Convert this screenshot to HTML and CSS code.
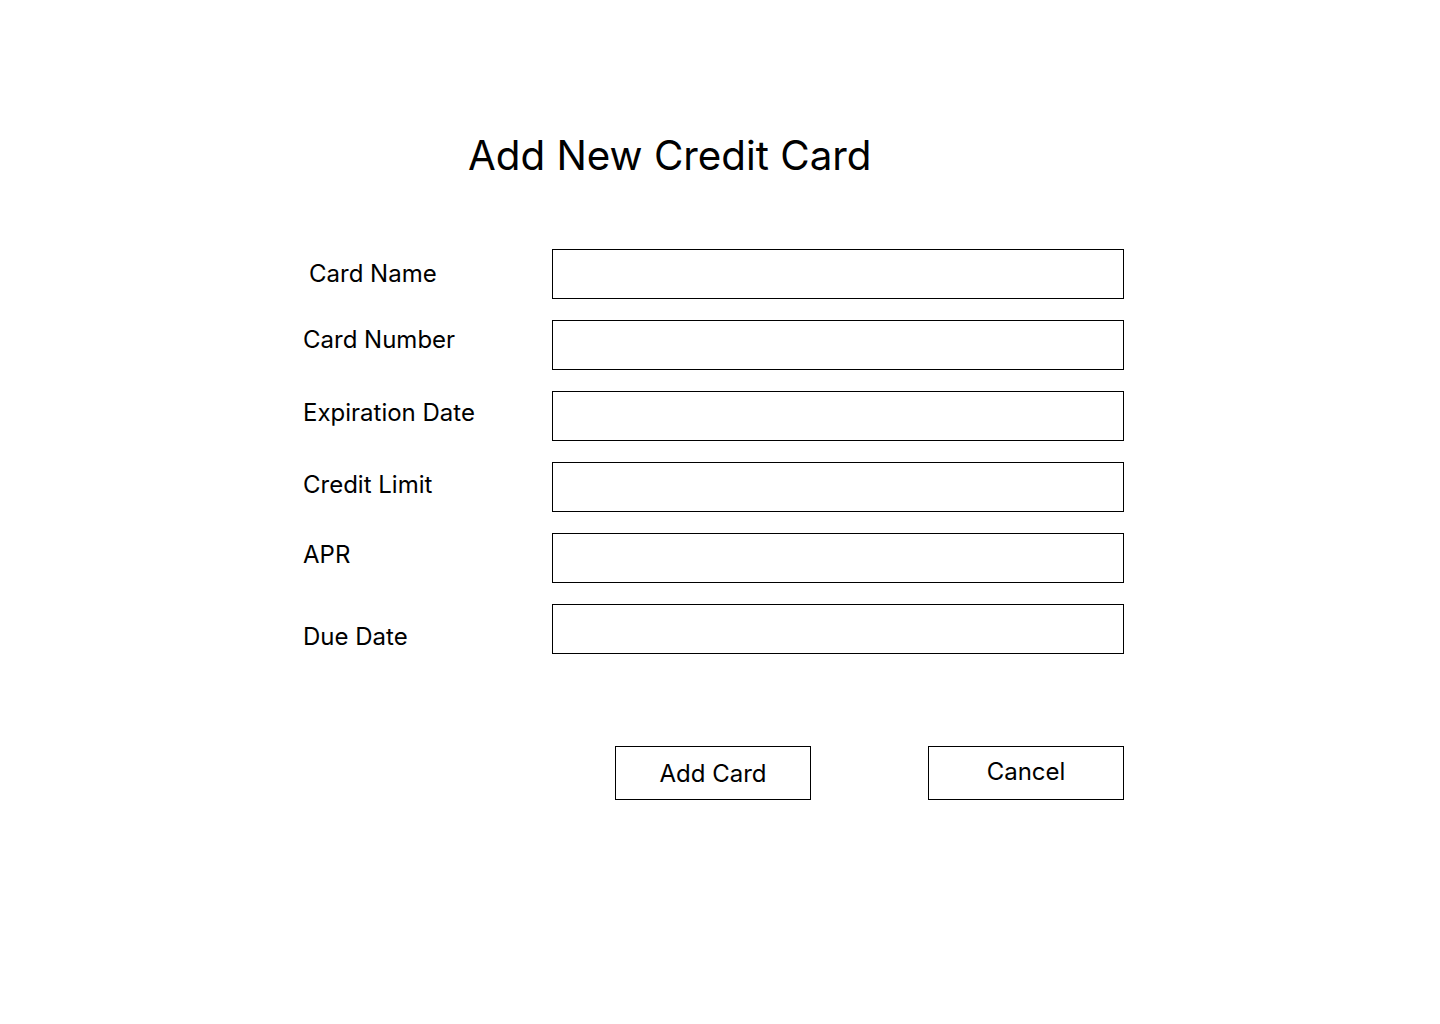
FILE: index.html
```html
<!DOCTYPE html>
<html lang="en">
<head>
<meta charset="utf-8">
<title>Add New Credit Card</title>
<link rel="stylesheet" href="styles.css">
</head>
<body>
<main class="page">
  <h1 class="title">Add New Credit Card</h1>
  <form class="form">
    <div class="row">
      <label class="label label-name" for="name">Card Name</label>
      <input class="field" id="name" type="text">
    </div>
    <div class="row">
      <label class="label label-number" for="number">Card Number</label>
      <input class="field" id="number" type="text">
    </div>
    <div class="row">
      <label class="label label-exp" for="exp">Expiration Date</label>
      <input class="field" id="exp" type="text">
    </div>
    <div class="row">
      <label class="label label-limit" for="limit">Credit Limit</label>
      <input class="field" id="limit" type="text">
    </div>
    <div class="row">
      <label class="label label-apr" for="apr">APR</label>
      <input class="field" id="apr" type="text">
    </div>
    <div class="row">
      <label class="label label-due" for="due">Due Date</label>
      <input class="field" id="due" type="text">
    </div>
    <div class="actions">
      <button class="btn btn-add" type="button">Add Card</button>
      <button class="btn btn-cancel" type="button">Cancel</button>
    </div>
  </form>
</main>
</body>
</html>
```

FILE: styles.css
```css
* { box-sizing: border-box; }
html, body { margin: 0; padding: 0; background: #ffffff; }
body {
  font-family: Inter, "Noto Sans", sans-serif;
  color: #000000;
  width: 1440px;
  height: 1024px;
}
.page {
  padding: 132px 0 0 303px;
}
.title {
  margin: 0 0 0 165px;
  font-size: 40.3px;
  font-weight: 400;
  line-height: 48px;
}
.form {
  margin-top: 69px;
  width: 821px;
  display: flex;
  flex-direction: column;
  gap: 21px;
}
.row {
  display: grid;
  grid-template-columns: 249px 572px;
  align-items: center;
  height: 50px;
}
.label {
  font-size: 24px;
  line-height: 30px;
}
.label-name { padding-left: 6px; }
.label-number { margin-top: -10px; }
.label-exp { margin-top: -6px; }
.label-limit { margin-top: -4px; }
.label-apr { margin-top: -6px; }
.label-due { margin-top: 16px; }
.field {
  width: 572px;
  height: 50px;
  border: 1px solid #000000;
  border-radius: 0;
  background: #ffffff;
  margin: 0;
  padding: 0 12px;
  font: inherit;
}
.actions {
  display: flex;
  gap: 117px;
  margin: 71px 0 0 312px;
}
.btn {
  width: 196px;
  height: 54px;
  border: 1px solid #000000;
  border-radius: 0;
  background: #ffffff;
  font-family: Inter, "Noto Sans", sans-serif;
  font-size: 24px;
  color: #000000;
  padding: 0;
}
.btn-cancel { padding-bottom: 3px; }
```
